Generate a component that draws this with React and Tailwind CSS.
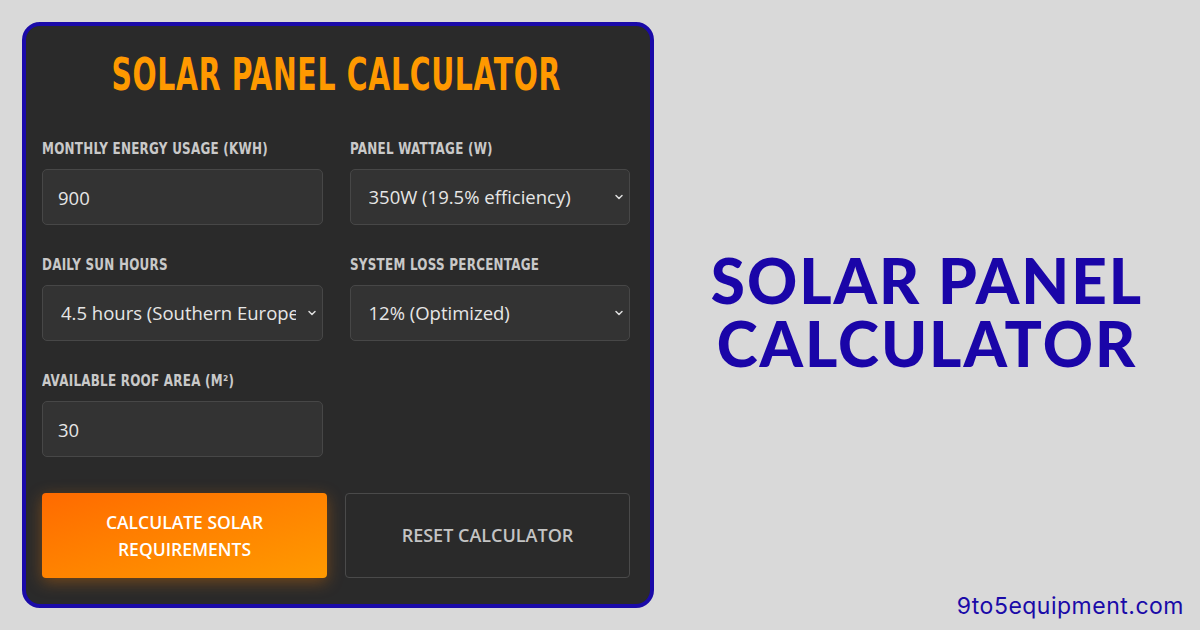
import { ChevronDown } from "lucide-react";

const labelCls =
  "block mb-[11px] whitespace-nowrap origin-left scale-x-[0.83] text-[16px] leading-[18px] font-bold tracking-[0.3px] text-[#c9c9c9] font-['DejaVu_Sans_Condensed','DejaVu_Sans',sans-serif]";

const fieldCls =
  "w-full h-[56px] rounded-[5px] border border-[#474747] bg-[#333333] text-[#e6e6e6] text-[18.5px] font-['Open_Sans',sans-serif] outline-none";

function Field({ label, value }) {
  return (
    <div>
      <label className={labelCls}>{label}</label>
      <input readOnly defaultValue={value} className={`${fieldCls} px-[15px]`} />
    </div>
  );
}

function Select({ label, value }) {
  return (
    <div>
      <label className={labelCls}>{label}</label>
      <div className="relative">
        <select
          defaultValue={value}
          className={`${fieldCls} appearance-none pl-[18px] pr-[26px] overflow-hidden`}
        >
          <option>{value}</option>
        </select>
        <ChevronDown
          size={12}
          strokeWidth={3}
          className="absolute right-[5px] top-1/2 -translate-y-1/2 text-[#dddddd] pointer-events-none"
        />
      </div>
    </div>
  );
}

export default function App() {
  return (
    <div className="w-[1200px] h-[630px] flex bg-[#d9d9d9] overflow-hidden">
      {/* Calculator card */}
      <div className="mt-[22px] ml-[22px] w-[632px] h-[586px] shrink-0 rounded-[18px] border-[4px] border-[#1a0aa8] bg-[#2a2a2a] pl-[16px] pr-[20px] pt-[24px]">
        <div className="flex justify-center">
          <h1 className="whitespace-nowrap scale-x-[0.7] text-[#ff9900] text-[45px] leading-[50px] font-bold tracking-[1px] font-['DejaVu_Sans_Condensed','DejaVu_Sans',sans-serif]">
            SOLAR PANEL CALCULATOR
          </h1>
        </div>

        <div className="mt-[40px] grid grid-cols-2 gap-x-[27px] gap-y-[31px]">
          <Field label="MONTHLY ENERGY USAGE (KWH)" value="900" />
          <Select label="PANEL WATTAGE (W)" value="350W (19.5% efficiency)" />
          <Select label="DAILY SUN HOURS" value="4.5 hours (Southern Europe)" />
          <Select label="SYSTEM LOSS PERCENTAGE" value="12% (Optimized)" />
          <Field label="AVAILABLE ROOF AREA (M²)" value="30" />
        </div>

        {/* Buttons */}
        <div className="mt-[36px] grid grid-cols-2 gap-x-[18px]">
          <button className="h-[85px] rounded-[4px] bg-gradient-to-br from-[#ff6a00] to-[#ff9a00] text-white text-[17.5px] leading-[27px] font-semibold font-['Open_Sans',sans-serif] shadow-[0_4px_16px_rgba(255,130,0,0.35)] whitespace-nowrap">
            CALCULATE SOLAR
            <br />
            REQUIREMENTS
          </button>
          <button className="h-[85px] rounded-[4px] border border-[#4a4a4a] bg-transparent text-[#c4c4c4] text-[18px] font-semibold font-['Open_Sans',sans-serif] whitespace-nowrap">
            RESET CALCULATOR
          </button>
        </div>
      </div>

      {/* Right side */}
      <div className="flex-1 flex flex-col">
        <div className="flex-1 flex items-center justify-center pt-[30px]">
          <h2 className="text-center text-[#1a05a8] text-[62px] leading-[63px] font-black tracking-[2px] font-['Lato',sans-serif]">
            SOLAR PANEL
            <br />
            CALCULATOR
          </h2>
        </div>
        <div className="text-right pr-[16px] pb-[11px] text-[23px] leading-[26px] tracking-[0.5px] text-[#1a0aa8] font-['Inter',sans-serif]">
          9to5equipment.com
        </div>
      </div>
    </div>
  );
}
